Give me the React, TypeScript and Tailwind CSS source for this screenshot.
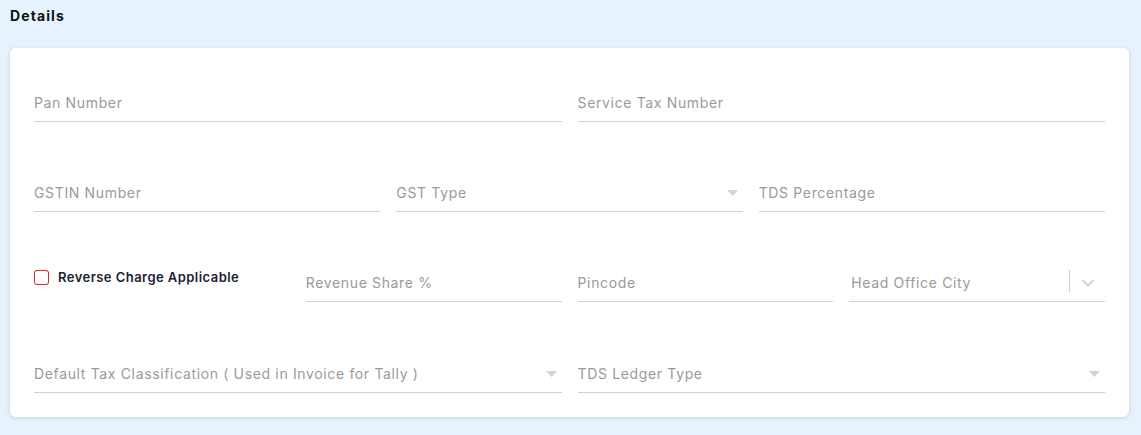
import React from 'react';

const Caret = () => (
  <svg width="11" height="6" viewBox="0 0 11 6" className="shrink-0">
    <path d="M0 0 L11 0 L5.5 6 Z" fill="#d4d4d4" />
  </svg>
);

interface FieldProps {
  label: string;
  caret?: boolean;
  className?: string;
}

const Field: React.FC<FieldProps> = ({ label, caret = false, className = '' }) => (
  <div className={`flex h-[50px] items-end ${className}`}>
    <div className="flex h-[29px] w-full items-start justify-between border-b border-[#d2d2d2]">
      <span className="text-[14px] leading-[20px] tracking-[0.65px] text-[#9a9a9a]">{label}</span>
      {caret && (
        <span className="mr-[5px] mt-[7px]">
          <Caret />
        </span>
      )}
    </div>
  </div>
);

const App: React.FC = () => {
  return (
    <div className="min-h-[435px] w-full bg-[#e6f2fe] pl-[10px] pr-[12px] pt-[6px] pb-[19px] font-['Inter','Open_Sans',sans-serif]">
      <h2 className="text-[14px] font-bold leading-[20px] tracking-[1.1px] text-[#111]">Details</h2>

      <div className="mt-[22px] rounded-[6px] bg-white px-[24px] pt-[24px] pb-[24px] shadow-[0_1px_4px_rgba(0,0,0,0.15)]">
        <div className="flex flex-col">
          {/* Row 1 */}
          <div className="grid grid-cols-2 gap-x-[16px]">
            <Field label="Pan Number" />
            <Field label="Service Tax Number" />
          </div>

          {/* Row 2 */}
          <div className="mt-[40px] grid grid-cols-3 gap-x-[16px]">
            <Field label="GSTIN Number" />
            <Field label="GST Type" caret />
            <Field label="TDS Percentage" />
          </div>

          {/* Row 3 */}
          <div className="mt-[40px] grid grid-cols-4 gap-x-[16px]">
            <div className="flex h-[50px] items-start pt-[16px]">
              <label className="flex items-center gap-[9px]">
                <span className="h-[15px] w-[15px] rounded-[3px] border border-[#e0242c] bg-white shadow-[0_0_1px_rgba(0,0,0,0.2)]" />
                <span className="text-[13px] font-semibold leading-[18px] tracking-[0.45px] text-[#1b2233]">Reverse Charge Applicable</span>
              </label>
            </div>
            <Field label="Revenue Share %" />
            <Field label="Pincode" />
            <div className="flex h-[50px] items-end">
              <div className="flex h-[40px] w-full items-center justify-between border-b border-[#d2d2d2] pb-[1px]">
                <span className="pl-[2px] pt-[3px] text-[14px] leading-[20px] tracking-[0.65px] text-[#9a9a9a]">Head Office City</span>
                <div className="flex items-center">
                  <span className="h-[22px] w-px bg-[#cfcfcf]" />
                  <svg width="20" height="20" viewBox="0 0 20 20" className="ml-[8px] mr-[7px] mt-[1px]">
                    <path d="M4.5 8 L10 13.5 L15.5 8" stroke="#cccccc" strokeWidth="1.6" fill="none" />
                  </svg>
                </div>
              </div>
            </div>
          </div>

          {/* Row 4 */}
          <div className="mt-[41px] grid grid-cols-2 gap-x-[16px]">
            <Field label="Default Tax Classification ( Used in Invoice for Tally )" caret />
            <Field label="TDS Ledger Type" caret />
          </div>
        </div>
      </div>
    </div>
  );
};

export default App;
